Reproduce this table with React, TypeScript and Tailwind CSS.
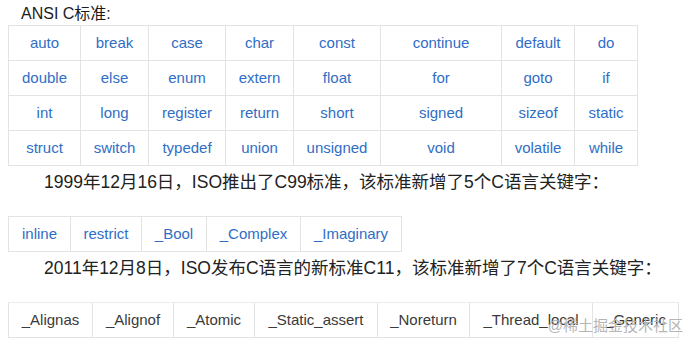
const font = {
    fontFamily: '"Liberation Sans", "Noto Sans CJK SC", sans-serif',
};

const ansi: [string, number][][] = [
    [["auto", 72], ["break", 68], ["case", 77], ["char", 68], ["const", 87], ["continue", 121], ["default", 73], ["do", 63]],
    [["double", 72], ["else", 68], ["enum", 77], ["extern", 68], ["float", 87], ["for", 121], ["goto", 73], ["if", 63]],
    [["int", 72], ["long", 68], ["register", 77], ["return", 68], ["short", 87], ["signed", 121], ["sizeof", 73], ["static", 63]],
    [["struct", 72], ["switch", 68], ["typedef", 77], ["union", 68], ["unsigned", 87], ["void", 121], ["volatile", 73], ["while", 63]],
];

const c99: [string, number][] = [
    ["inline", 62],
    ["restrict", 71],
    ["_Bool", 65],
    ["_Complex", 94],
    ["_Imaginary", 101],
];

const c11: [string, number][] = [
    ["_Alignas", 84],
    ["_Alignof", 81],
    ["_Atomic", 81],
    ["_Static_assert", 123],
    ["_Noreturn", 92],
    ["_Thread_local", 123],
    ["_Generic", 86],
];

function KeywordRow({ cells, dark }: { cells: [string, number][]; dark?: boolean }) {
    return (
        <div className="flex">
            {cells.map(([word, width], i) => (
                <div
                    key={word}
                    className={`flex h-[35px] shrink-0 items-center justify-center border-b border-[#e3e3e3] text-[15px] ${
                        i === 0 ? "border-l" : ""
                    } border-r ${dark ? "text-[#3a3a3a]" : "text-[#2f6ec6]"}`}
                    style={{ width: i === 0 ? width + 1 : width }}
                >
                    {word}
                </div>
            ))}
        </div>
    );
}

export default function App() {
    return (
        <div className="relative h-[341px] w-[690px] overflow-hidden bg-white" style={font}>
            <div className="h-[25px] pl-[21px] text-[16px] leading-[28px] text-[#1c1c1c]">
                ANSI C标准:
            </div>

            <div className="ml-2 w-fit border-t border-[#e3e3e3]">
                {ansi.map((row, r) => (
                    <KeywordRow key={r} cells={row} />
                ))}
            </div>

            <p className="mb-[18px] h-[32px] pl-[44px] text-[17.5px] leading-[32px] text-[#222]">
                1999年12月16日，ISO推出了C99标准，该标准新增了5个C语言关键字：
            </p>

            <div className="ml-2 w-fit border-t border-[#e3e3e3]">
                <KeywordRow cells={c99} />
            </div>

            <p className="mb-[18px] h-[32px] pl-[44px] text-[17.5px] leading-[32px] text-[#222]">
                2011年12月8日，ISO发布C语言的新标准C11，该标准新增了7个C语言关键字：
            </p>

            <div className="ml-2 w-fit border-t border-[#ececec]">
                <KeywordRow cells={c11} dark />
            </div>

            <div className="absolute right-[7px] bottom-[4px] text-[15px] text-[#b5b5b5]">
                @稀土掘金技术社区
            </div>
        </div>
    );
}
